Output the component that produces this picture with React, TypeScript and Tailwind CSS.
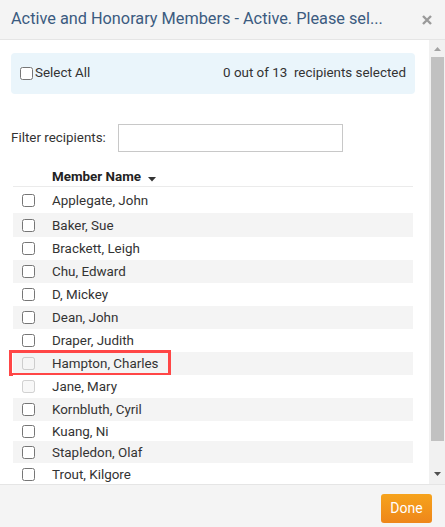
import React from "react";

type Member = { name: string; h: string; disabled?: boolean; highlight?: boolean };

const members: Member[] = [
  { name: "Applegate, John", h: "h-[26px]" },
  { name: "Baker, Sue", h: "h-[24px]" },
  { name: "Brackett, Leigh", h: "h-[23px]" },
  { name: "Chu, Edward", h: "h-[23px]" },
  { name: "D, Mickey", h: "h-[23px]" },
  { name: "Dean, John", h: "h-[23px]" },
  { name: "Draper, Judith", h: "h-[23px]" },
  { name: "Hampton, Charles", h: "h-[23px]", disabled: true, highlight: true },
  { name: "Jane, Mary", h: "h-[23px]", disabled: true },
  { name: "Kornbluth, Cyril", h: "h-[23px]" },
  { name: "Kuang, Ni", h: "h-[20px]" },
  { name: "Stapledon, Olaf", h: "h-[22px]" },
  { name: "Trout, Kilgore", h: "h-[23px]" },
];

export default function App() {
  return (
    <div className="flex h-[527px] w-[445px] flex-col bg-white font-['Roboto',sans-serif] text-[13.4px] text-[#333]">
      <div className="flex h-[40px] shrink-0 items-center justify-between border-b border-[#e5e5e5] bg-[#f4f4f4] pl-[11px] pr-[13px]">
        <span className="text-[16.3px] text-[#3b5b80]">Active and Honorary Members - Active. Please sel...</span>
        <svg width="10" height="10" viewBox="0 0 10 10" className="text-[#9a9a9a]">
          <path d="M1 1L9 9M9 1L1 9" stroke="currentColor" strokeWidth="2.4" />
        </svg>
      </div>

      <div className="flex h-[444px] shrink-0">
        <div className="min-w-0 flex-1 overflow-hidden pl-[11px] pr-[14px] pt-[13px]">
          <div className="flex h-[41px] items-center justify-between rounded-[4px] bg-[#eaf5fb] pl-[9px] pr-[9px]">
            <label className="flex items-center gap-[2px]">
              <input type="checkbox" className="m-0 h-[13px] w-[13px]" />
              <span>Select All</span>
            </label>
            <span>0 out of 13&nbsp; recipients selected</span>
          </div>

          <div className="mt-[30px] flex items-center">
            <span>Filter recipients:</span>
            <input type="text" className="ml-[12px] h-[28px] w-[225px] border border-[#c8c8c8] bg-white px-2 outline-none" />
          </div>

          <div className="mx-[2px] mt-[11px]">
            <div className="flex h-[24px] items-center border-b border-[#ebebeb] pl-[39px] pt-[5px]">
              <span className="font-bold text-[#222]">Member Name</span>
              <svg width="8" height="5" viewBox="0 0 8 5" className="ml-[7px] mt-[4px] text-[#333]">
                <path d="M0 0H8L4 4.5Z" fill="currentColor" />
              </svg>
            </div>
            {members.map((m, i) => (
              <div
                key={m.name}
                className={`relative flex items-center ${m.h} ${i % 2 === 1 ? "bg-[#f4f4f4]" : "bg-white"}`}
              >
                <input type="checkbox" disabled={m.disabled} className="m-0 ml-[9px] h-[13px] w-[13px]" />
                <span className="ml-[17px] pt-[2px]">{m.name}</span>
                {m.highlight && (
                  <div className="absolute left-[-4px] top-[-2px] h-[26px] w-[162px] border-[3px] border-[#ff4646]" />
                )}
              </div>
            ))}
          </div>
        </div>

        <div className="flex w-[16px] shrink-0 flex-col bg-[#f1f1f1]">
          <div className="flex h-[17px] items-center justify-center pt-[1px]">
            <svg width="7" height="4" viewBox="0 0 7 4" className="text-[#a3a3a3]">
              <path d="M3.5 0L7 4H0Z" fill="currentColor" />
            </svg>
          </div>
          <div className="ml-[2px] mr-[1px] h-[384px] bg-[#c1c1c1]" />
          <div className="flex flex-1 items-end justify-center pb-[8px]">
            <svg width="7" height="4" viewBox="0 0 7 4" className="text-[#505050]">
              <path d="M0 0H7L3.5 4Z" fill="currentColor" />
            </svg>
          </div>
        </div>
      </div>

      <div className="flex flex-1 items-start justify-end border-t border-[#e5e5e5] bg-[#f4f4f4] pr-[13px] pt-[9px]">
        <button className="h-[29px] w-[51px] rounded-[3px] bg-gradient-to-b from-[#f6a31c] to-[#ee861a] text-[14px] text-white">
          Done
        </button>
      </div>
    </div>
  );
}
